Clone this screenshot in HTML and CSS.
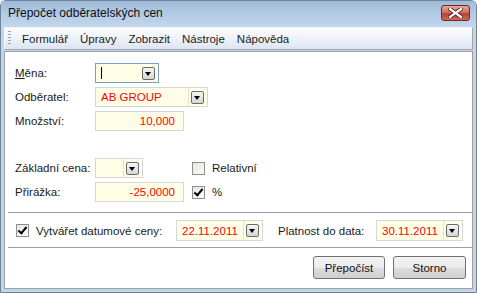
FILE: index.html
```html
<!DOCTYPE html>
<html lang="cs">
<head>
  <meta charset="UTF-8" />
  <title>Přepočet odběratelských cen</title>
  <link rel="stylesheet" href="styles.css">
</head>
<body>

<div class="window">
  <div class="titlebar">
    <span class="title">Přepočet odběratelských cen</span>
    <span class="close">
      <svg width="15" height="10" viewBox="0 0 15 10">
        <path d="M2 1 L13 9 M13 1 L2 9" stroke="#4a2020" stroke-width="4" stroke-linecap="square"/>
        <path d="M2 1 L13 9 M13 1 L2 9" stroke="#fff" stroke-width="2.2" stroke-linecap="square"/>
      </svg>
    </span>
  </div>

  <div class="menubar">
    <span class="grip"></span>
    <span class="menu-item">Formulář</span>
    <span class="menu-item">Úpravy</span>
    <span class="menu-item">Zobrazit</span>
    <span class="menu-item">Nástroje</span>
    <span class="menu-item">Nápověda</span>
  </div>

  <div class="panel">
    <div class="form">
      <label class="lbl"><u>M</u>ěna:</label>
      <div class="field focus w-mena"><span class="caret"></span><span class="drop"></span></div>
      <span></span>

      <label class="lbl">Odběratel:</label>
      <div class="field w-odb"><span class="val">AB GROUP</span><span class="sep"></span><span class="drop"></span></div>
      <span></span>

      <label class="lbl">Množství:</label>
      <div class="field w-num"><span class="val num">10,000</span></div>
      <span></span>

      <label class="lbl gap">Základní cena:</label>
      <div class="field w-zakl gap"><span class="val"></span><span class="sep"></span><span class="drop"></span></div>
      <label class="check gap"><span class="box"></span>Relativní</label>

      <label class="lbl">Přirážka:</label>
      <div class="field w-num"><span class="val num">-25,0000</span></div>
      <label class="check"><span class="box checked"></span>%</label>
    </div>

    <div class="line"></div>

    <div class="dates">
      <label class="check date-check"><span class="box checked"></span>Vytvářet datumové ceny:</label>
      <div class="field w-date"><span class="val">22.11.2011</span><span class="sep"></span><span class="drop"></span></div>
      <span class="date-lbl">Platnost do data:</span>
      <div class="field w-date"><span class="val">30.11.2011</span><span class="sep"></span><span class="drop"></span></div>
    </div>

    <div class="line"></div>

    <div class="actions">
      <button class="btn">Přepočíst</button>
      <button class="btn">Storno</button>
    </div>
  </div>
</div>

</body>
</html>
```

FILE: styles.css
```css
body {
  margin: 0;
  font-family: 'Liberation Sans', Arial, sans-serif;
  font-size: 11.5px;
  color: #1a1a1a;
  background: #fff;
}

.window {
  width: 477px;
  height: 293px;
  box-sizing: border-box;
  border: 1px solid #6e849c;
  border-radius: 6px 6px 0 0;
  background: #c2d6eb;
  display: flex;
  flex-direction: column;
  padding: 0 3px 3px 3px;
}

.titlebar {
  height: 26px;
  display: flex;
  align-items: center;
  justify-content: space-between;
  margin: 0 -3px;
  padding: 0 6px 0 7px;
  background: linear-gradient(to bottom, #9fbad8, #b7cde6 60%, #c2d6eb);
}

.title {
  font-size: 12px;
  color: #111;
  margin-top: -2px;
}

.close {
  width: 27px;
  height: 14px;
  border: 1px solid #6b2b2b;
  border-radius: 3px;
  display: flex;
  align-items: center;
  justify-content: center;
  background: linear-gradient(to bottom, #e7a79a, #d0705f 45%, #b8412f 55%, #cc6a55);
  margin-top: -3px;
}

.menubar {
  height: 21px;
  display: flex;
  align-items: center;
  border: 1px solid #a3a7ad;
  border-top-color: #f4f7fb;
  border-left-color: #f4f7fb;
  background: linear-gradient(to bottom, #fbfcfe, #eef2f9 50%, #dde4f2);
  padding-left: 3px;
}

.grip {
  width: 3px;
  height: 15px;
  margin-right: 5px;
  background: repeating-linear-gradient(to bottom, #9aa3b0 0 1px, transparent 1px 3px);
}

.menu-item {
  padding: 0 6px;
}

.panel {
  flex: 1;
  margin-top: 1px;
  background: #fff;
  border: 1px solid #a0a0a0;
  display: flex;
  flex-direction: column;
}

.form {
  display: grid;
  grid-template-columns: 80px 97px auto;
  row-gap: 4px;
  align-items: center;
  padding: 11px 0 0 10px;
}

.form .gap {
  margin-top: 23px;
}

.lbl {
  white-space: nowrap;
}

.field {
  height: 20px;
  box-sizing: border-box;
  border: 1px solid #d3d7dc;
  background: #ffffe8;
  display: flex;
  align-items: center;
  color: #f00;
}

.field.focus {
  border-color: #7aa0cd;
}

.w-mena { width: 64px; }
.w-odb { width: 113px; }
.w-num { width: 89px; }
.w-zakl { width: 48px; }
.w-date { width: 87px; height: 21px; }

.val {
  flex: 1;
  padding-left: 5px;
  white-space: nowrap;
}

.val.num {
  text-align: right;
  padding-right: 8px;
}

.caret {
  flex: 1;
  margin-left: 5px;
  height: 12px;
  border-left: 1px solid #000;
}

.sep {
  width: 1px;
  align-self: stretch;
  background: #e2e2d6;
  margin-right: 2px;
}

.drop {
  width: 11px;
  height: 11px;
  border: 1px solid #6a6a6a;
  border-radius: 2px;
  background: linear-gradient(to bottom, #f6f6f6, #d6d6d6);
  margin-right: 3px;
  position: relative;
}

.drop::after {
  content: "";
  position: absolute;
  left: 2px;
  top: 4px;
  border-left: 3.5px solid transparent;
  border-right: 3.5px solid transparent;
  border-top: 4px solid #000;
}

.check {
  display: flex;
  align-items: center;
  gap: 7px;
  white-space: nowrap;
}

.box {
  width: 11px;
  height: 11px;
  border: 1px solid #8e8f8f;
  background: linear-gradient(135deg, #e6e6e6, #fbfbf1);
  position: relative;
}

.box.checked::after {
  content: "";
  position: absolute;
  left: 3px;
  top: 0px;
  width: 3px;
  height: 7px;
  border-right: 2px solid #000;
  border-bottom: 2px solid #000;
  transform: rotate(40deg);
}

.line {
  height: 1px;
  background: #a0a0a0;
  margin-left: 3px;
}

.form + .line {
  margin-top: 10px;
}

.dates {
  display: flex;
  align-items: center;
  padding: 7px 0 6px 11px;
}

.date-check {
  width: 160px;
}

.date-lbl {
  white-space: nowrap;
  width: 98px;
  margin-left: 15px;
}

.actions {
  display: flex;
  justify-content: flex-end;
  gap: 8px;
  padding: 8px 6px 0 0;
}

.btn {
  font-family: inherit;
  font-size: 11.5px;
  color: #111;
  width: 72px;
  height: 23px;
  border: 1px solid #707070;
  border-radius: 3px;
  background: linear-gradient(to bottom, #f2f2f2, #ebebeb 50%, #dddddd 51%, #cfcfcf);
  padding: 0;
}

.btn + .btn {
  width: 73px;
}
```
